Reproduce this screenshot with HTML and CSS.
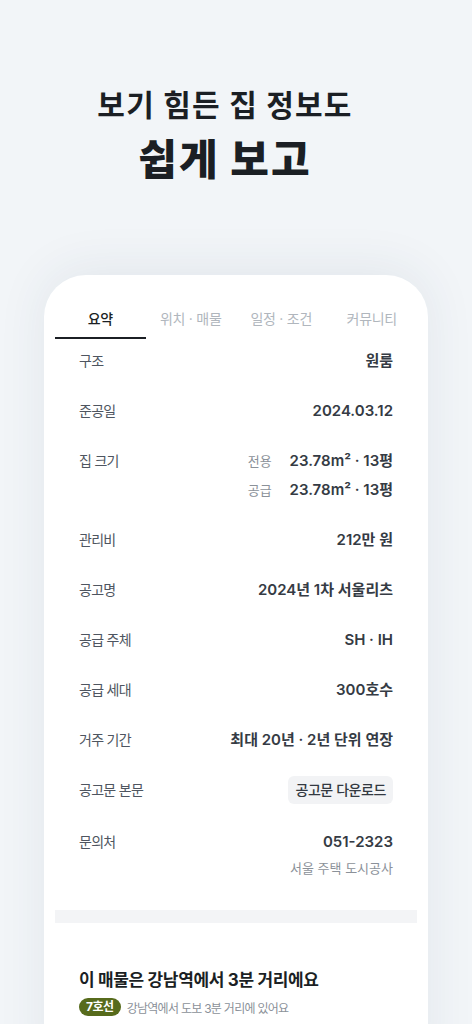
FILE: index.html
```html
<!DOCTYPE html>
<html lang="ko">
<head>
<meta charset="utf-8">
<link rel="stylesheet" href="styles.css">
</head>
<body>
<header class="hero">
  <p class="hero-line1">보기 힘든 집 정보도</p>
  <p class="hero-line2">쉽게 보고</p>
</header>
<section class="card">
  <nav class="tabs">
    <div class="tab active">요약</div>
    <div class="tab">위치 · 매물</div>
    <div class="tab">일정 · 조건</div>
    <div class="tab">커뮤니티</div>
  </nav>
  <div class="rows">
    <div class="row"><span class="label">구조</span><span class="value">원룸</span></div>
    <div class="row"><span class="label">준공일</span><span class="value">2024.03.12</span></div>
    <div class="row">
      <span class="label">집 크기</span>
      <div class="size-list">
        <div class="size-line"><span class="size-kind">전용</span><span class="value">23.78m² · 13평</span></div>
        <div class="size-line"><span class="size-kind">공급</span><span class="value">23.78m² · 13평</span></div>
      </div>
    </div>
    <div class="row"><span class="label">관리비</span><span class="value">212만 원</span></div>
    <div class="row"><span class="label">공고명</span><span class="value">2024년 1차 서울리츠</span></div>
    <div class="row"><span class="label">공급 주체</span><span class="value">SH · IH</span></div>
    <div class="row"><span class="label">공급 세대</span><span class="value">300호수</span></div>
    <div class="row"><span class="label">거주 기간</span><span class="value">최대 20년 · 2년 단위 연장</span></div>
    <div class="row row-btn"><span class="label">공고문 본문</span><span class="btn">공고문 다운로드</span></div>
    <div class="row">
      <span class="label">문의처</span>
      <div class="contact">
        <span class="value">051-2323</span>
        <span class="sub">서울 주택 도시공사</span>
      </div>
    </div>
  </div>
  <div class="band"></div>
  <div class="location">
    <h2 class="loc-title">이 매물은 강남역에서 3분 거리에요</h2>
    <div class="loc-line"><span class="badge">7호선</span><span class="loc-desc">강남역에서 도보 3분 거리에 있어요</span></div>
  </div>
</section>
</body>
</html>
```

FILE: styles.css
```css
html, body {
  margin: 0;
  padding: 0;
}
body {
  background: #f2f5f8;
  font-family: Inter, "Noto Sans CJK KR", sans-serif;
  width: 472px;
  height: 1024px;
  overflow: hidden;
}
.hero {
  padding: 85px 22px 0 0;
  text-align: center;
  color: #1b1f24;
}
.hero p {
  margin: 0;
}
.hero-line1 {
  font-size: 30px;
  line-height: 40px;
  font-weight: 700;
  letter-spacing: 0.04em;
}
.hero-line2 {
  margin-top: 9px !important;
  font-size: 42px;
  line-height: 52px;
  font-weight: 900;
  letter-spacing: 0.05em;
}
.card {
  margin: 89px 0 0 44px;
  width: 384px;
  height: 800px;
  box-sizing: border-box;
  background: #fff;
  border-radius: 42px 42px 0 0;
  padding: 34px 11px 0;
  box-shadow: 0 -6px 50px rgba(40, 60, 90, 0.08);
}
.tabs {
  display: flex;
}
.tab {
  flex: 1;
  text-align: center;
  font-size: 14px;
  line-height: 20px;
  padding-bottom: 8px;
  border-bottom: 2px solid transparent;
  color: #b0b6bd;
  letter-spacing: -0.02em;
}
.tab.active {
  color: #1b1f24;
  font-weight: 500;
  border-bottom-color: #1b1f24;
}
.row {
  display: flex;
  justify-content: space-between;
  align-items: flex-start;
  padding: 11px 24px 17px;
}
.label {
  font-size: 14px;
  line-height: 22px;
  color: #4e5560;
  letter-spacing: -0.05em;
}
.value {
  font-size: 15px;
  line-height: 22px;
  font-weight: 600;
  color: #353b44;
  letter-spacing: 0;
}
.size-list {
  display: flex;
  flex-direction: column;
  gap: 7px;
}
.size-line {
  display: flex;
  justify-content: flex-end;
  gap: 18px;
}
.size-kind {
  font-size: 13px;
  line-height: 22px;
  color: #8b9199;
  letter-spacing: 0;
}
.row-btn {
  align-items: center;
  padding-top: 8px;
  padding-bottom: 16px;
}
.btn {
  background: #f2f3f5;
  border-radius: 6px;
  height: 28px;
  line-height: 28px;
  padding: 0 7px;
  font-size: 14px;
  font-weight: 500;
  color: #333941;
  letter-spacing: -0.03em;
}
.contact {
  display: flex;
  flex-direction: column;
  align-items: flex-end;
  gap: 5px;
}
.sub {
  font-size: 13px;
  line-height: 20px;
  color: #8b9199;
  letter-spacing: 0;
}
.band {
  margin-top: 15px;
  height: 13px;
  background: #f3f4f6;
}
.location {
  padding: 45px 24px 0;
}
.loc-title {
  margin: 0;
  font-size: 17px;
  line-height: 24px;
  font-weight: 700;
  color: #1b1f24;
  letter-spacing: -0.02em;
}
.loc-line {
  display: flex;
  align-items: center;
  gap: 6px;
  margin-top: 6px;
}
.badge {
  background: #576b1c;
  color: #fff;
  font-size: 12px;
  font-weight: 700;
  height: 18px;
  line-height: 18px;
  padding: 0 7px;
  border-radius: 9px;
  letter-spacing: -0.04em;
}
.loc-desc {
  font-size: 12px;
  color: #8b9199;
  letter-spacing: -0.06em;
}
```
